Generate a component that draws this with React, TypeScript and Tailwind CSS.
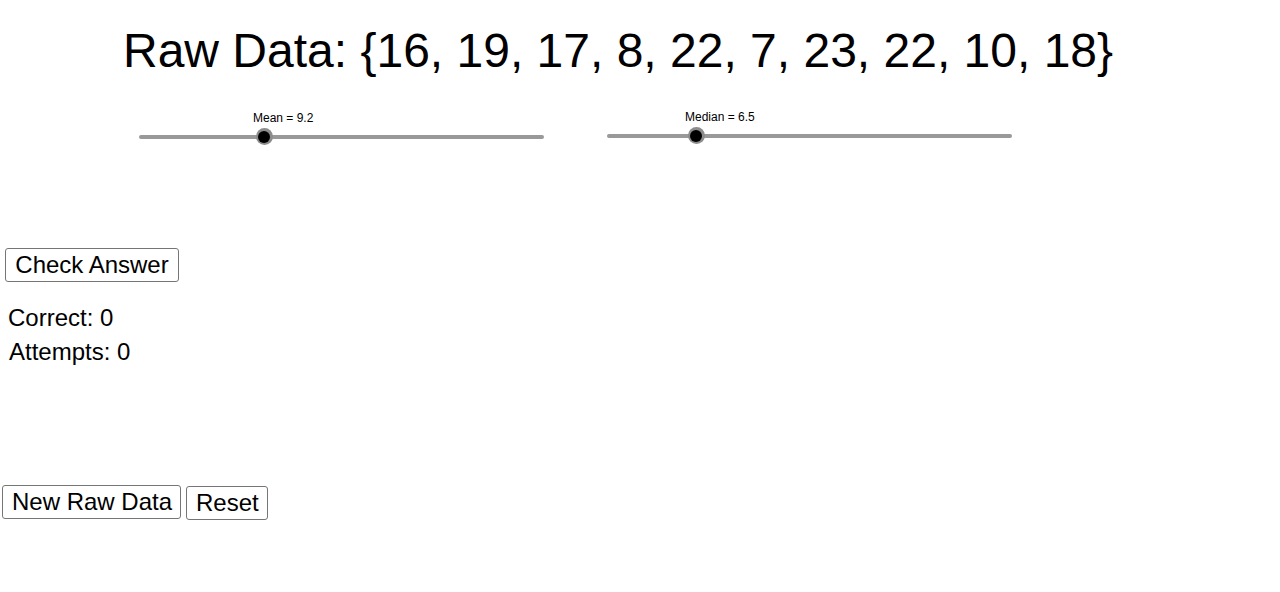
import React from "react";

const font = { fontFamily: '"Liberation Sans", Arial, sans-serif' };

function Slider({ label, labelOffset, knob }: { label: string; labelOffset: number; knob: number }) {
    return (
        <div className="w-[405px] flex flex-col">
            <div className="h-[14px] text-[12px] leading-[14px] whitespace-nowrap" style={{ paddingLeft: labelOffset }}>
                {label}
            </div>
            <div className="relative mt-[3px] h-[17px] flex items-center">
                <div className="w-full h-[4px] rounded-full bg-[#999999]" />
                {/* knob sits over the track */}
                <div className="absolute top-0 w-[17px] h-[17px] rounded-full bg-[#8c8c8c] flex items-center justify-center" style={{ left: knob - 8.5 }}>
                    <div className="w-[12px] h-[12px] rounded-full bg-black" />
                </div>
            </div>
        </div>
    );
}

function Btn({ children, className }: { children: React.ReactNode; className?: string }) {
    return (
        <button className={"h-[34px] px-[9px] border border-[#767676] rounded-[3px] bg-white text-[24px] leading-none whitespace-nowrap " + (className ?? "")}>
            {children}
        </button>
    );
}

export default function App() {
    return (
        <div className="w-[1280px] h-[592px] bg-white overflow-hidden text-black flex flex-col items-start" style={font}>
            <div className="mt-[23px] ml-[123px] text-[48px] leading-[55px] whitespace-nowrap">
                Raw Data: {"{"}16, 19, 17, 8, 22, 7, 23, 22, 10, 18{"}"}
            </div>

            <div className="mt-[33px] ml-[139px] flex items-start gap-[63px]">
                <Slider label="Mean = 9.2" labelOffset={114} knob={125} />
                <div className="-mt-px">
                    <Slider label="Median = 6.5" labelOffset={78} knob={89} />
                </div>
            </div>

            <Btn className="mt-[103px] ml-[5px] w-[174px]">Check Answer</Btn>

            <div className="mt-[22px] ml-[8px] text-[24px] leading-[28px]">Correct: 0</div>
            <div className="mt-[6px] ml-[9px] text-[24px] leading-[28px]">Attempts: 0</div>

            <div className="mt-[119px] ml-[2px] flex items-start gap-[5px]">
                <Btn className="w-[179px]">New Raw Data</Btn>
                <Btn className="mt-px w-[82px]">Reset</Btn>
            </div>
        </div>
    );
}
